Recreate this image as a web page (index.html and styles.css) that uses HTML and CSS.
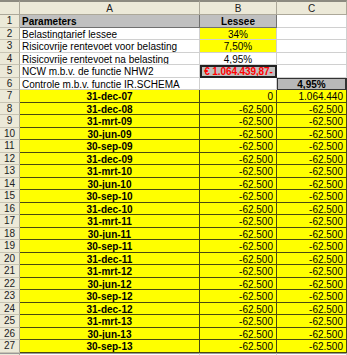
FILE: index.html
```html
<!DOCTYPE html>
<html>
<head>
<meta charset="utf-8">
<link rel="stylesheet" href="styles.css">
</head>
<body>
<div class="sheet">
  <div class="hd corner"></div><div class="hd">A</div><div class="hd">B</div><div class="hd">C</div>

  <div class="rn">1</div><div class="c gray b">Parameters</div><div class="c gray b ctr">Lessee</div><div class="c"></div>
  <div class="rn">2</div><div class="c">Belastingtarief lessee</div><div class="c yel ctr">34%</div><div class="c"></div>
  <div class="rn">3</div><div class="c">Risicovrije rentevoet voor belasting</div><div class="c yel ctr">7,50%</div><div class="c"></div>
  <div class="rn">4</div><div class="c">Risicovrije rentevoet na belasting</div><div class="c ctr">4,95%</div><div class="c"></div>
  <div class="rn">5</div><div class="c">NCW m.b.v. de functie NHW2</div><div class="c ncw">€ 1.064.439,87-</div><div class="c"></div>
  <div class="rn">6</div><div class="c">Controle m.b.v. functie IR.SCHEMA</div><div class="c"></div><div class="c irr">4,95%</div>

  <div class="rn">7</div><div class="c y d">31-dec-07</div><div class="c y r">0</div><div class="c y r">1.064.440</div>
  <div class="rn">8</div><div class="c y d">31-dec-08</div><div class="c y r">-62.500</div><div class="c y r">-62.500</div>
  <div class="rn">9</div><div class="c y d">31-mrt-09</div><div class="c y r">-62.500</div><div class="c y r">-62.500</div>
  <div class="rn">10</div><div class="c y d">30-jun-09</div><div class="c y r">-62.500</div><div class="c y r">-62.500</div>
  <div class="rn">11</div><div class="c y d">30-sep-09</div><div class="c y r">-62.500</div><div class="c y r">-62.500</div>
  <div class="rn">12</div><div class="c y d">31-dec-09</div><div class="c y r">-62.500</div><div class="c y r">-62.500</div>
  <div class="rn">13</div><div class="c y d">31-mrt-10</div><div class="c y r">-62.500</div><div class="c y r">-62.500</div>
  <div class="rn">14</div><div class="c y d">30-jun-10</div><div class="c y r">-62.500</div><div class="c y r">-62.500</div>
  <div class="rn">15</div><div class="c y d">30-sep-10</div><div class="c y r">-62.500</div><div class="c y r">-62.500</div>
  <div class="rn">16</div><div class="c y d">31-dec-10</div><div class="c y r">-62.500</div><div class="c y r">-62.500</div>
  <div class="rn">17</div><div class="c y d">31-mrt-11</div><div class="c y r">-62.500</div><div class="c y r">-62.500</div>
  <div class="rn">18</div><div class="c y d">30-jun-11</div><div class="c y r">-62.500</div><div class="c y r">-62.500</div>
  <div class="rn">19</div><div class="c y d">30-sep-11</div><div class="c y r">-62.500</div><div class="c y r">-62.500</div>
  <div class="rn">20</div><div class="c y d">31-dec-11</div><div class="c y r">-62.500</div><div class="c y r">-62.500</div>
  <div class="rn">21</div><div class="c y d">31-mrt-12</div><div class="c y r">-62.500</div><div class="c y r">-62.500</div>
  <div class="rn">22</div><div class="c y d">30-jun-12</div><div class="c y r">-62.500</div><div class="c y r">-62.500</div>
  <div class="rn">23</div><div class="c y d">30-sep-12</div><div class="c y r">-62.500</div><div class="c y r">-62.500</div>
  <div class="rn">24</div><div class="c y d">31-dec-12</div><div class="c y r">-62.500</div><div class="c y r">-62.500</div>
  <div class="rn">25</div><div class="c y d">31-mrt-13</div><div class="c y r">-62.500</div><div class="c y r">-62.500</div>
  <div class="rn">26</div><div class="c y d">30-jun-13</div><div class="c y r">-62.500</div><div class="c y r">-62.500</div>
  <div class="rn">27</div><div class="c y d">30-sep-13</div><div class="c y r">-62.500</div><div class="c y r">-62.500</div>
  <div class="rn last"></div><div class="c last"></div><div class="c last"></div><div class="c last"></div>
</div>
</body>
</html>
```

FILE: styles.css
```css
html, body {
  margin: 0;
  padding: 0;
  background: #fff;
}
.sheet {
  display: grid;
  grid-template-columns: 20px 180px 77px 70px;
  grid-template-rows: 15px repeat(27, 12.5px) 6px;
  width: 347px;
  height: 355px;
  overflow: hidden;
  font-family: "Liberation Sans", Arial, sans-serif;
  font-size: 10px;
  color: #000;
}
.sheet > div {
  box-sizing: border-box;
  white-space: nowrap;
  overflow: hidden;
  line-height: 11px;
}
.hd {
  background: #ece9d8;
  border-top: 2px solid #8c8a80;
  border-right: 1px solid #aca899;
  border-bottom: 1px solid #aca899;
  text-align: center;
  color: #222;
  padding-top: 1px;
}
.rn {
  background: #ece9d8;
  border-right: 1px solid #aca899;
  border-bottom: 1px solid #c8c4b4;
  text-align: center;
  color: #222;
}
.c {
  border-right: 1px solid #d0d0d0;
  border-bottom: 1px solid #d0d0d0;
  padding: 1px 2px 0 2px;
}
.b { font-weight: bold; }
.ctr { text-align: center; }
.r { text-align: right; }
.gray {
  background: #c0c0c0;
  border-right: 1px solid #707070;
  border-bottom: 1px solid #707070;
}
.yel { background: #ffff00; }
.sheet > .ncw {
  background: #c0c0c0;
  border: 2px solid #222;
  color: #ff0000;
  font-weight: bold;
  text-align: center;
  padding: 0;
  line-height: 9px;
  letter-spacing: -0.1px;
}
.sheet > .irr {
  background: #b8b8b8;
  border: 1px solid #333;
  border-right-width: 2px;
  font-weight: bold;
  text-align: center;
  padding-top: 0;
}
.y {
  background: #ffff00;
  border-right: 1px solid #4a4a10;
  border-bottom: 1px solid #4a4a10;
}
.d {
  font-weight: bold;
  text-align: center;
}
.r.y { padding-right: 3px; }
.last {
  border-top: 1px solid #999;
}
.c.last { background: #fff; }
```
